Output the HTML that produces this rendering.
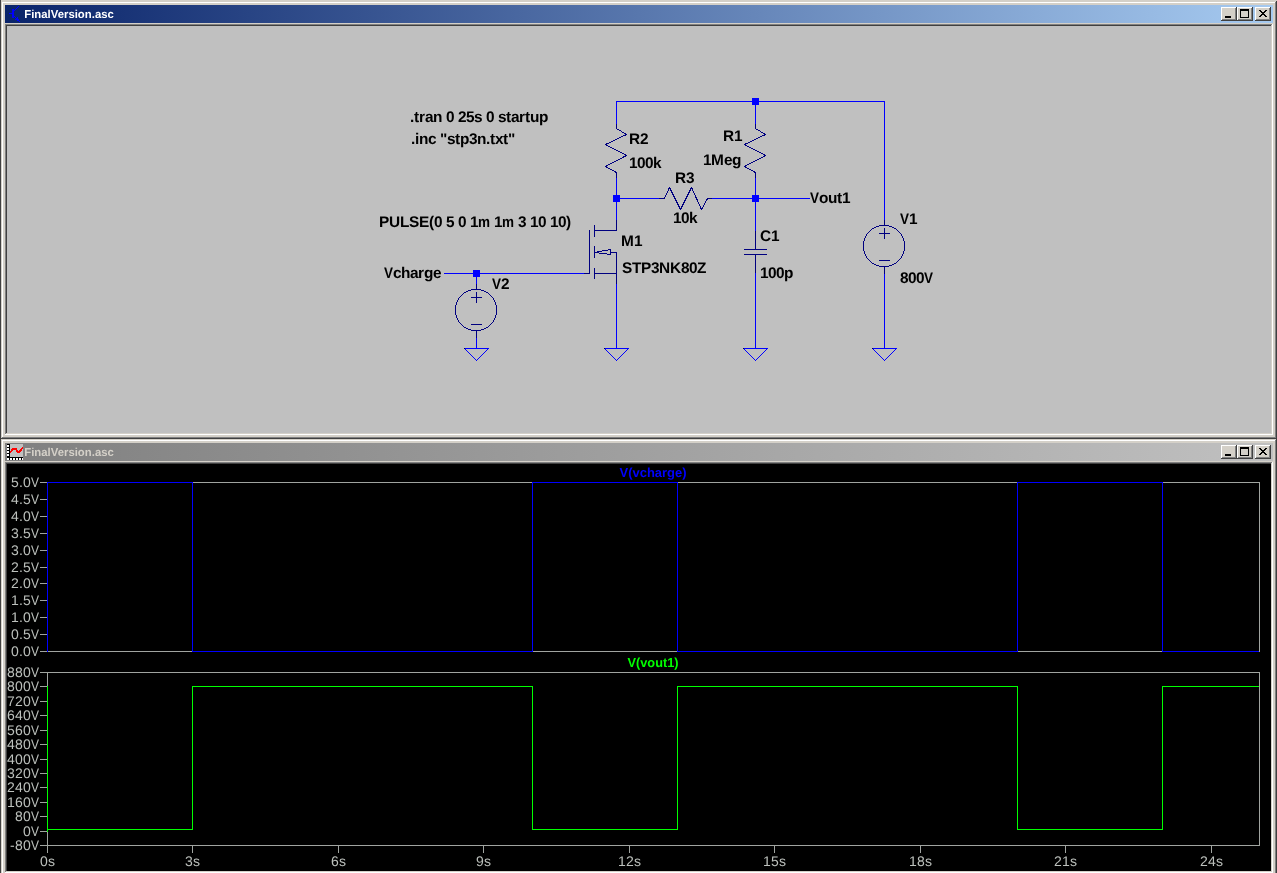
<!DOCTYPE html>
<html><head><meta charset="utf-8"><title>FinalVersion.asc</title>
<style>
html,body{margin:0;padding:0;background:#d4d0c8;overflow:hidden}
body{width:1277px;height:873px;position:relative}
svg{position:absolute;left:0;top:0;display:block;will-change:transform;font-family:"Liberation Sans",sans-serif;shape-rendering:crispEdges}
text{text-rendering:geometricPrecision}
</style></head><body>
<svg width="1277" height="873" viewBox="0 0 1277 873">
<defs>
<linearGradient id="ga" x1="0" y1="0" x2="1" y2="0"><stop offset="0" stop-color="#0a246a"/><stop offset="1" stop-color="#a6caf0"/></linearGradient>
<linearGradient id="gi" x1="0" y1="0" x2="1" y2="0"><stop offset="0" stop-color="#808080"/><stop offset="1" stop-color="#c0c0c0"/></linearGradient>
</defs>
<rect x="0" y="0" width="1277" height="873" fill="#d4d0c8"/>
<rect x="0" y="0" width="1" height="873" fill="#404040"/>
<rect x="1" y="1" width="1276" height="1" fill="#d4d0c8"/>
<rect x="1" y="1" width="1" height="438" fill="#d4d0c8"/>
<rect x="2" y="2" width="1274" height="1" fill="#ffffff"/>
<rect x="2" y="2" width="1" height="436" fill="#ffffff"/>
<rect x="1276" y="1" width="1" height="438" fill="#404040"/>
<rect x="1" y="438" width="1276" height="1" fill="#404040"/>
<rect x="1275" y="2" width="1" height="436" fill="#808080"/>
<rect x="2" y="437" width="1274" height="1" fill="#808080"/>
<rect x="5" y="5" width="1268" height="18" fill="url(#ga)"/>
<rect x="5" y="24" width="1268" height="1" fill="#808080"/>
<rect x="5" y="24" width="1" height="411" fill="#808080"/>
<rect x="6" y="25" width="1266" height="1" fill="#404040"/>
<rect x="6" y="25" width="1" height="409" fill="#404040"/>
<rect x="1272" y="24" width="1" height="411" fill="#ffffff"/>
<rect x="5" y="434" width="1268" height="1" fill="#ffffff"/>
<rect x="1271" y="25" width="1" height="409" fill="#d4d0c8"/>
<rect x="6" y="433" width="1266" height="1" fill="#d4d0c8"/>
<rect x="7" y="26" width="1264" height="407" fill="#c0c0c0"/>
<rect x="1221" y="7" width="16" height="14" fill="#d4d0c8"/>
<rect x="1221" y="7" width="15" height="1" fill="#ffffff"/>
<rect x="1221" y="7" width="1" height="13" fill="#ffffff"/>
<rect x="1221" y="20" width="16" height="1" fill="#404040"/>
<rect x="1236" y="7" width="1" height="14" fill="#404040"/>
<rect x="1222" y="19" width="14" height="1" fill="#808080"/>
<rect x="1235" y="8" width="1" height="12" fill="#808080"/>
<rect x="1225" y="16" width="6" height="2" fill="#000"/>
<rect x="1237" y="7" width="16" height="14" fill="#d4d0c8"/>
<rect x="1237" y="7" width="15" height="1" fill="#ffffff"/>
<rect x="1237" y="7" width="1" height="13" fill="#ffffff"/>
<rect x="1237" y="20" width="16" height="1" fill="#404040"/>
<rect x="1252" y="7" width="1" height="14" fill="#404040"/>
<rect x="1238" y="19" width="14" height="1" fill="#808080"/>
<rect x="1251" y="8" width="1" height="12" fill="#808080"/>
<rect x="1240" y="9" width="9" height="2" fill="#000"/>
<rect x="1240" y="9" width="1" height="9" fill="#000"/>
<rect x="1248" y="9" width="1" height="9" fill="#000"/>
<rect x="1240" y="17" width="9" height="1" fill="#000"/>
<rect x="1255" y="7" width="16" height="14" fill="#d4d0c8"/>
<rect x="1255" y="7" width="15" height="1" fill="#ffffff"/>
<rect x="1255" y="7" width="1" height="13" fill="#ffffff"/>
<rect x="1255" y="20" width="16" height="1" fill="#404040"/>
<rect x="1270" y="7" width="1" height="14" fill="#404040"/>
<rect x="1256" y="19" width="14" height="1" fill="#808080"/>
<rect x="1269" y="8" width="1" height="12" fill="#808080"/>
<rect x="1259" y="10" width="2" height="1" fill="#000"/>
<rect x="1265" y="10" width="2" height="1" fill="#000"/>
<rect x="1260" y="11" width="2" height="1" fill="#000"/>
<rect x="1264" y="11" width="2" height="1" fill="#000"/>
<rect x="1261" y="12" width="2" height="1" fill="#000"/>
<rect x="1263" y="12" width="2" height="1" fill="#000"/>
<rect x="1262" y="13" width="2" height="1" fill="#000"/>
<rect x="1262" y="13" width="2" height="1" fill="#000"/>
<rect x="1263" y="14" width="2" height="1" fill="#000"/>
<rect x="1261" y="14" width="2" height="1" fill="#000"/>
<rect x="1264" y="15" width="2" height="1" fill="#000"/>
<rect x="1260" y="15" width="2" height="1" fill="#000"/>
<rect x="1265" y="16" width="2" height="1" fill="#000"/>
<rect x="1259" y="16" width="2" height="1" fill="#000"/>
<text x="24.3" y="18" font-size="11.5" fill="#fff" font-weight="bold" textLength="89.5" lengthAdjust="spacingAndGlyphs">FinalVersion.asc</text>
<rect x="12" y="9" width="2" height="9" fill="#0000ff"/>
<rect x="9" y="13" width="3" height="1" fill="#0000ff"/>
<rect x="14" y="10" width="1" height="1" fill="#0000ff"/>
<rect x="15" y="9" width="1" height="1" fill="#0000ff"/>
<rect x="16" y="8" width="1" height="1" fill="#0000ff"/>
<rect x="17" y="7" width="1" height="1" fill="#0000ff"/>
<rect x="18" y="6" width="1" height="1" fill="#0000ff"/>
<rect x="14" y="10" width="1" height="1" fill="#0000ff"/>
<rect x="14" y="16" width="1" height="1" fill="#0000ff"/>
<rect x="15" y="17" width="1" height="1" fill="#0000ff"/>
<rect x="16" y="18" width="1" height="1" fill="#0000ff"/>
<rect x="17" y="19" width="1" height="1" fill="#0000ff"/>
<rect x="18" y="20" width="1" height="1" fill="#0000ff"/>
<rect x="19" y="21" width="1" height="1" fill="#0000ff"/>
<rect x="16" y="18" width="2" height="1" fill="#0000ff"/>
<rect x="15" y="19" width="4" height="1" fill="#0000ff"/>
<rect x="17" y="17" width="1" height="1" fill="#0000ff"/>
<rect x="17" y="20" width="2" height="1" fill="#0000ff"/>
<rect x="1" y="439" width="1276" height="1" fill="#d4d0c8"/>
<rect x="1" y="439" width="1" height="438" fill="#d4d0c8"/>
<rect x="2" y="440" width="1274" height="1" fill="#ffffff"/>
<rect x="2" y="440" width="1" height="436" fill="#ffffff"/>
<rect x="1276" y="439" width="1" height="438" fill="#404040"/>
<rect x="1" y="876" width="1276" height="1" fill="#404040"/>
<rect x="1275" y="440" width="1" height="436" fill="#808080"/>
<rect x="2" y="875" width="1274" height="1" fill="#808080"/>
<rect x="5" y="443" width="1268" height="18" fill="url(#gi)"/>
<rect x="5" y="462" width="1268" height="1" fill="#808080"/>
<rect x="5" y="462" width="1" height="411" fill="#808080"/>
<rect x="6" y="463" width="1266" height="1" fill="#404040"/>
<rect x="6" y="463" width="1" height="409" fill="#404040"/>
<rect x="1272" y="462" width="1" height="411" fill="#ffffff"/>
<rect x="5" y="872" width="1268" height="1" fill="#ffffff"/>
<rect x="1271" y="463" width="1" height="409" fill="#d4d0c8"/>
<rect x="6" y="871" width="1266" height="1" fill="#d4d0c8"/>
<rect x="7" y="464" width="1264" height="407" fill="#000000"/>
<rect x="1221" y="445" width="16" height="14" fill="#d4d0c8"/>
<rect x="1221" y="445" width="15" height="1" fill="#ffffff"/>
<rect x="1221" y="445" width="1" height="13" fill="#ffffff"/>
<rect x="1221" y="458" width="16" height="1" fill="#404040"/>
<rect x="1236" y="445" width="1" height="14" fill="#404040"/>
<rect x="1222" y="457" width="14" height="1" fill="#808080"/>
<rect x="1235" y="446" width="1" height="12" fill="#808080"/>
<rect x="1225" y="454" width="6" height="2" fill="#000"/>
<rect x="1237" y="445" width="16" height="14" fill="#d4d0c8"/>
<rect x="1237" y="445" width="15" height="1" fill="#ffffff"/>
<rect x="1237" y="445" width="1" height="13" fill="#ffffff"/>
<rect x="1237" y="458" width="16" height="1" fill="#404040"/>
<rect x="1252" y="445" width="1" height="14" fill="#404040"/>
<rect x="1238" y="457" width="14" height="1" fill="#808080"/>
<rect x="1251" y="446" width="1" height="12" fill="#808080"/>
<rect x="1240" y="447" width="9" height="2" fill="#000"/>
<rect x="1240" y="447" width="1" height="9" fill="#000"/>
<rect x="1248" y="447" width="1" height="9" fill="#000"/>
<rect x="1240" y="455" width="9" height="1" fill="#000"/>
<rect x="1255" y="445" width="16" height="14" fill="#d4d0c8"/>
<rect x="1255" y="445" width="15" height="1" fill="#ffffff"/>
<rect x="1255" y="445" width="1" height="13" fill="#ffffff"/>
<rect x="1255" y="458" width="16" height="1" fill="#404040"/>
<rect x="1270" y="445" width="1" height="14" fill="#404040"/>
<rect x="1256" y="457" width="14" height="1" fill="#808080"/>
<rect x="1269" y="446" width="1" height="12" fill="#808080"/>
<rect x="1259" y="448" width="2" height="1" fill="#000"/>
<rect x="1265" y="448" width="2" height="1" fill="#000"/>
<rect x="1260" y="449" width="2" height="1" fill="#000"/>
<rect x="1264" y="449" width="2" height="1" fill="#000"/>
<rect x="1261" y="450" width="2" height="1" fill="#000"/>
<rect x="1263" y="450" width="2" height="1" fill="#000"/>
<rect x="1262" y="451" width="2" height="1" fill="#000"/>
<rect x="1262" y="451" width="2" height="1" fill="#000"/>
<rect x="1263" y="452" width="2" height="1" fill="#000"/>
<rect x="1261" y="452" width="2" height="1" fill="#000"/>
<rect x="1264" y="453" width="2" height="1" fill="#000"/>
<rect x="1260" y="453" width="2" height="1" fill="#000"/>
<rect x="1265" y="454" width="2" height="1" fill="#000"/>
<rect x="1259" y="454" width="2" height="1" fill="#000"/>
<text x="24.3" y="456" font-size="11.5" fill="#d4d0c8" font-weight="bold" textLength="89.5" lengthAdjust="spacingAndGlyphs">FinalVersion.asc</text>
<rect x="7" y="444" width="16" height="16" fill="#000"/>
<rect x="10" y="444" width="13" height="13" fill="#c0c0c0"/>
<rect x="7" y="445" width="2" height="2" fill="#ffffff"/>
<rect x="7" y="448" width="2" height="2" fill="#ffffff"/>
<rect x="7" y="451" width="2" height="2" fill="#ffffff"/>
<rect x="7" y="454" width="2" height="2" fill="#ffffff"/>
<rect x="7" y="458" width="2" height="2" fill="#ffffff"/>
<rect x="10" y="458" width="2" height="2" fill="#ffffff"/>
<rect x="13" y="458" width="2" height="2" fill="#ffffff"/>
<rect x="16" y="458" width="2" height="2" fill="#ffffff"/>
<rect x="19" y="458" width="2" height="2" fill="#ffffff"/>
<rect x="22" y="458" width="1" height="2" fill="#ffffff"/>
<path d="M10.3 452.6 L13 448.6 L15.5 448.6 L17.5 451.6 L19.6 451.6 L23 447.4" stroke="#ff0000" stroke-width="1.8" fill="none" stroke-linecap="butt" stroke-linejoin="miter"/>
<rect x="616" y="101" width="269" height="1" fill="#0000ff"/>
<rect x="616" y="101" width="1" height="23" fill="#0000ff"/>
<rect x="616" y="177" width="1" height="43" fill="#0000ff"/>
<rect x="755" y="101" width="1" height="23" fill="#0000ff"/>
<rect x="755" y="177" width="1" height="54" fill="#0000ff"/>
<rect x="884" y="101" width="1" height="119" fill="#0000ff"/>
<rect x="884" y="273" width="1" height="76" fill="#0000ff"/>
<rect x="616" y="198" width="43" height="1" fill="#0000ff"/>
<rect x="712" y="198" width="98" height="1" fill="#0000ff"/>
<rect x="755" y="273" width="1" height="76" fill="#0000ff"/>
<rect x="616" y="284" width="1" height="65" fill="#0000ff"/>
<rect x="444" y="273" width="140" height="1" fill="#0000ff"/>
<rect x="476" y="273" width="1" height="11" fill="#0000ff"/>
<rect x="476" y="337" width="1" height="12" fill="#0000ff"/>
<rect x="752" y="98" width="7" height="7" fill="#0000ff"/>
<rect x="613" y="195" width="7" height="7" fill="#0000ff"/>
<rect x="752" y="195" width="7" height="7" fill="#0000ff"/>
<rect x="473" y="270" width="7" height="7" fill="#0000ff"/>
<rect x="464" y="348" width="25" height="1" fill="#0000ff"/>
<path d="M464.5 348.5 L476.5 360.5 L488.5 348.5" stroke="#0000ff" stroke-width="1" fill="none" stroke-linecap="square" stroke-linejoin="bevel"/>
<rect x="464" y="348" width="1" height="1" fill="#000040"/>
<rect x="604" y="348" width="25" height="1" fill="#0000ff"/>
<path d="M604.5 348.5 L616.5 360.5 L628.5 348.5" stroke="#0000ff" stroke-width="1" fill="none" stroke-linecap="square" stroke-linejoin="bevel"/>
<rect x="604" y="348" width="1" height="1" fill="#000040"/>
<rect x="743" y="348" width="25" height="1" fill="#0000ff"/>
<path d="M743.5 348.5 L755.5 360.5 L767.5 348.5" stroke="#0000ff" stroke-width="1" fill="none" stroke-linecap="square" stroke-linejoin="bevel"/>
<rect x="743" y="348" width="1" height="1" fill="#000040"/>
<rect x="872" y="348" width="25" height="1" fill="#0000ff"/>
<path d="M872.5 348.5 L884.5 360.5 L896.5 348.5" stroke="#0000ff" stroke-width="1" fill="none" stroke-linecap="square" stroke-linejoin="bevel"/>
<rect x="872" y="348" width="1" height="1" fill="#000040"/>
<path d="M616.5 124.5 L616.5 128.5 L626.5 134.5 L605.5 144.5 L626.5 155.5 L605.5 166.5 L616.5 172.5 L616.5 177.5" stroke="#000080" stroke-width="1" fill="none" stroke-linecap="square" stroke-linejoin="bevel"/>
<path d="M755.5 124.5 L755.5 128.5 L765.5 134.5 L744.5 144.5 L765.5 155.5 L744.5 166.5 L755.5 172.5 L755.5 177.5" stroke="#000080" stroke-width="1" fill="none" stroke-linecap="square" stroke-linejoin="bevel"/>
<path d="M659.5 198.5 L664.5 198.5 L669.5 187.5 L680.5 209.5 L691.5 187.5 L701.5 209.5 L707.5 198.5 L711.5 198.5" stroke="#000080" stroke-width="1" fill="none" stroke-linecap="square" stroke-linejoin="bevel"/>
<rect x="755" y="231" width="1" height="19" fill="#000080"/>
<rect x="744" y="249" width="23" height="1" fill="#000080"/>
<rect x="744" y="254" width="23" height="1" fill="#000080"/>
<rect x="755" y="254" width="1" height="19" fill="#000080"/>
<rect x="884" y="220" width="1" height="6" fill="#000080"/>
<rect x="879" y="225" width="10" height="1" fill="#000080"/>
<rect x="876" y="226" width="3" height="1" fill="#000080"/>
<rect x="889" y="226" width="3" height="1" fill="#000080"/>
<rect x="874" y="227" width="2" height="1" fill="#000080"/>
<rect x="892" y="227" width="2" height="1" fill="#000080"/>
<rect x="872" y="228" width="2" height="1" fill="#000080"/>
<rect x="894" y="228" width="2" height="1" fill="#000080"/>
<rect x="871" y="229" width="1" height="1" fill="#000080"/>
<rect x="896" y="229" width="1" height="1" fill="#000080"/>
<rect x="870" y="230" width="1" height="1" fill="#000080"/>
<rect x="897" y="230" width="1" height="1" fill="#000080"/>
<rect x="869" y="231" width="1" height="1" fill="#000080"/>
<rect x="898" y="231" width="1" height="1" fill="#000080"/>
<rect x="868" y="232" width="1" height="1" fill="#000080"/>
<rect x="899" y="232" width="1" height="1" fill="#000080"/>
<rect x="867" y="233" width="1" height="1" fill="#000080"/>
<rect x="900" y="233" width="1" height="1" fill="#000080"/>
<rect x="866" y="234" width="1" height="1" fill="#000080"/>
<rect x="901" y="234" width="1" height="1" fill="#000080"/>
<rect x="866" y="235" width="1" height="1" fill="#000080"/>
<rect x="901" y="235" width="1" height="1" fill="#000080"/>
<rect x="865" y="236" width="1" height="1" fill="#000080"/>
<rect x="902" y="236" width="1" height="1" fill="#000080"/>
<rect x="865" y="237" width="1" height="1" fill="#000080"/>
<rect x="902" y="237" width="1" height="1" fill="#000080"/>
<rect x="864" y="238" width="1" height="1" fill="#000080"/>
<rect x="903" y="238" width="1" height="1" fill="#000080"/>
<rect x="864" y="239" width="1" height="1" fill="#000080"/>
<rect x="903" y="239" width="1" height="1" fill="#000080"/>
<rect x="864" y="240" width="1" height="1" fill="#000080"/>
<rect x="903" y="240" width="1" height="1" fill="#000080"/>
<rect x="863" y="241" width="1" height="1" fill="#000080"/>
<rect x="904" y="241" width="1" height="1" fill="#000080"/>
<rect x="863" y="242" width="1" height="1" fill="#000080"/>
<rect x="904" y="242" width="1" height="1" fill="#000080"/>
<rect x="863" y="243" width="1" height="1" fill="#000080"/>
<rect x="904" y="243" width="1" height="1" fill="#000080"/>
<rect x="863" y="244" width="1" height="1" fill="#000080"/>
<rect x="904" y="244" width="1" height="1" fill="#000080"/>
<rect x="863" y="245" width="1" height="1" fill="#000080"/>
<rect x="904" y="245" width="1" height="1" fill="#000080"/>
<rect x="863" y="246" width="1" height="1" fill="#000080"/>
<rect x="904" y="246" width="1" height="1" fill="#000080"/>
<rect x="863" y="247" width="1" height="1" fill="#000080"/>
<rect x="904" y="247" width="1" height="1" fill="#000080"/>
<rect x="863" y="248" width="1" height="1" fill="#000080"/>
<rect x="904" y="248" width="1" height="1" fill="#000080"/>
<rect x="863" y="249" width="1" height="1" fill="#000080"/>
<rect x="904" y="249" width="1" height="1" fill="#000080"/>
<rect x="863" y="250" width="1" height="1" fill="#000080"/>
<rect x="904" y="250" width="1" height="1" fill="#000080"/>
<rect x="864" y="251" width="1" height="1" fill="#000080"/>
<rect x="903" y="251" width="1" height="1" fill="#000080"/>
<rect x="864" y="252" width="1" height="1" fill="#000080"/>
<rect x="903" y="252" width="1" height="1" fill="#000080"/>
<rect x="864" y="253" width="1" height="1" fill="#000080"/>
<rect x="903" y="253" width="1" height="1" fill="#000080"/>
<rect x="865" y="254" width="1" height="1" fill="#000080"/>
<rect x="902" y="254" width="1" height="1" fill="#000080"/>
<rect x="865" y="255" width="1" height="1" fill="#000080"/>
<rect x="902" y="255" width="1" height="1" fill="#000080"/>
<rect x="866" y="256" width="1" height="1" fill="#000080"/>
<rect x="901" y="256" width="1" height="1" fill="#000080"/>
<rect x="866" y="257" width="1" height="1" fill="#000080"/>
<rect x="901" y="257" width="1" height="1" fill="#000080"/>
<rect x="867" y="258" width="1" height="1" fill="#000080"/>
<rect x="900" y="258" width="1" height="1" fill="#000080"/>
<rect x="868" y="259" width="1" height="1" fill="#000080"/>
<rect x="899" y="259" width="1" height="1" fill="#000080"/>
<rect x="869" y="260" width="1" height="1" fill="#000080"/>
<rect x="898" y="260" width="1" height="1" fill="#000080"/>
<rect x="870" y="261" width="1" height="1" fill="#000080"/>
<rect x="897" y="261" width="1" height="1" fill="#000080"/>
<rect x="871" y="262" width="1" height="1" fill="#000080"/>
<rect x="896" y="262" width="1" height="1" fill="#000080"/>
<rect x="872" y="263" width="2" height="1" fill="#000080"/>
<rect x="894" y="263" width="2" height="1" fill="#000080"/>
<rect x="874" y="264" width="2" height="1" fill="#000080"/>
<rect x="892" y="264" width="2" height="1" fill="#000080"/>
<rect x="876" y="265" width="3" height="1" fill="#000080"/>
<rect x="889" y="265" width="3" height="1" fill="#000080"/>
<rect x="879" y="266" width="10" height="1" fill="#000080"/>
<rect x="879" y="233" width="11" height="1" fill="#000080"/>
<rect x="884" y="228" width="1" height="11" fill="#000080"/>
<rect x="879" y="260" width="11" height="1" fill="#000080"/>
<rect x="884" y="267" width="1" height="7" fill="#000080"/>
<rect x="476" y="284" width="1" height="6" fill="#000080"/>
<rect x="471" y="289" width="10" height="1" fill="#000080"/>
<rect x="468" y="290" width="3" height="1" fill="#000080"/>
<rect x="481" y="290" width="3" height="1" fill="#000080"/>
<rect x="466" y="291" width="2" height="1" fill="#000080"/>
<rect x="484" y="291" width="2" height="1" fill="#000080"/>
<rect x="464" y="292" width="2" height="1" fill="#000080"/>
<rect x="486" y="292" width="2" height="1" fill="#000080"/>
<rect x="463" y="293" width="1" height="1" fill="#000080"/>
<rect x="488" y="293" width="1" height="1" fill="#000080"/>
<rect x="462" y="294" width="1" height="1" fill="#000080"/>
<rect x="489" y="294" width="1" height="1" fill="#000080"/>
<rect x="461" y="295" width="1" height="1" fill="#000080"/>
<rect x="490" y="295" width="1" height="1" fill="#000080"/>
<rect x="460" y="296" width="1" height="1" fill="#000080"/>
<rect x="491" y="296" width="1" height="1" fill="#000080"/>
<rect x="459" y="297" width="1" height="1" fill="#000080"/>
<rect x="492" y="297" width="1" height="1" fill="#000080"/>
<rect x="458" y="298" width="1" height="1" fill="#000080"/>
<rect x="493" y="298" width="1" height="1" fill="#000080"/>
<rect x="458" y="299" width="1" height="1" fill="#000080"/>
<rect x="493" y="299" width="1" height="1" fill="#000080"/>
<rect x="457" y="300" width="1" height="1" fill="#000080"/>
<rect x="494" y="300" width="1" height="1" fill="#000080"/>
<rect x="457" y="301" width="1" height="1" fill="#000080"/>
<rect x="494" y="301" width="1" height="1" fill="#000080"/>
<rect x="456" y="302" width="1" height="1" fill="#000080"/>
<rect x="495" y="302" width="1" height="1" fill="#000080"/>
<rect x="456" y="303" width="1" height="1" fill="#000080"/>
<rect x="495" y="303" width="1" height="1" fill="#000080"/>
<rect x="456" y="304" width="1" height="1" fill="#000080"/>
<rect x="495" y="304" width="1" height="1" fill="#000080"/>
<rect x="455" y="305" width="1" height="1" fill="#000080"/>
<rect x="496" y="305" width="1" height="1" fill="#000080"/>
<rect x="455" y="306" width="1" height="1" fill="#000080"/>
<rect x="496" y="306" width="1" height="1" fill="#000080"/>
<rect x="455" y="307" width="1" height="1" fill="#000080"/>
<rect x="496" y="307" width="1" height="1" fill="#000080"/>
<rect x="455" y="308" width="1" height="1" fill="#000080"/>
<rect x="496" y="308" width="1" height="1" fill="#000080"/>
<rect x="455" y="309" width="1" height="1" fill="#000080"/>
<rect x="496" y="309" width="1" height="1" fill="#000080"/>
<rect x="455" y="310" width="1" height="1" fill="#000080"/>
<rect x="496" y="310" width="1" height="1" fill="#000080"/>
<rect x="455" y="311" width="1" height="1" fill="#000080"/>
<rect x="496" y="311" width="1" height="1" fill="#000080"/>
<rect x="455" y="312" width="1" height="1" fill="#000080"/>
<rect x="496" y="312" width="1" height="1" fill="#000080"/>
<rect x="455" y="313" width="1" height="1" fill="#000080"/>
<rect x="496" y="313" width="1" height="1" fill="#000080"/>
<rect x="455" y="314" width="1" height="1" fill="#000080"/>
<rect x="496" y="314" width="1" height="1" fill="#000080"/>
<rect x="456" y="315" width="1" height="1" fill="#000080"/>
<rect x="495" y="315" width="1" height="1" fill="#000080"/>
<rect x="456" y="316" width="1" height="1" fill="#000080"/>
<rect x="495" y="316" width="1" height="1" fill="#000080"/>
<rect x="456" y="317" width="1" height="1" fill="#000080"/>
<rect x="495" y="317" width="1" height="1" fill="#000080"/>
<rect x="457" y="318" width="1" height="1" fill="#000080"/>
<rect x="494" y="318" width="1" height="1" fill="#000080"/>
<rect x="457" y="319" width="1" height="1" fill="#000080"/>
<rect x="494" y="319" width="1" height="1" fill="#000080"/>
<rect x="458" y="320" width="1" height="1" fill="#000080"/>
<rect x="493" y="320" width="1" height="1" fill="#000080"/>
<rect x="458" y="321" width="1" height="1" fill="#000080"/>
<rect x="493" y="321" width="1" height="1" fill="#000080"/>
<rect x="459" y="322" width="1" height="1" fill="#000080"/>
<rect x="492" y="322" width="1" height="1" fill="#000080"/>
<rect x="460" y="323" width="1" height="1" fill="#000080"/>
<rect x="491" y="323" width="1" height="1" fill="#000080"/>
<rect x="461" y="324" width="1" height="1" fill="#000080"/>
<rect x="490" y="324" width="1" height="1" fill="#000080"/>
<rect x="462" y="325" width="1" height="1" fill="#000080"/>
<rect x="489" y="325" width="1" height="1" fill="#000080"/>
<rect x="463" y="326" width="1" height="1" fill="#000080"/>
<rect x="488" y="326" width="1" height="1" fill="#000080"/>
<rect x="464" y="327" width="2" height="1" fill="#000080"/>
<rect x="486" y="327" width="2" height="1" fill="#000080"/>
<rect x="466" y="328" width="2" height="1" fill="#000080"/>
<rect x="484" y="328" width="2" height="1" fill="#000080"/>
<rect x="468" y="329" width="3" height="1" fill="#000080"/>
<rect x="481" y="329" width="3" height="1" fill="#000080"/>
<rect x="471" y="330" width="10" height="1" fill="#000080"/>
<rect x="471" y="297" width="11" height="1" fill="#000080"/>
<rect x="476" y="292" width="1" height="11" fill="#000080"/>
<rect x="471" y="324" width="11" height="1" fill="#000080"/>
<rect x="476" y="331" width="1" height="7" fill="#000080"/>
<rect x="616" y="220" width="1" height="11" fill="#000080"/>
<rect x="594" y="230" width="23" height="1" fill="#000080"/>
<rect x="594" y="225" width="1" height="12" fill="#000080"/>
<rect x="594" y="246" width="1" height="12" fill="#000080"/>
<rect x="594" y="268" width="1" height="11" fill="#000080"/>
<rect x="589" y="230" width="1" height="44" fill="#000080"/>
<rect x="584" y="273" width="6" height="1" fill="#000080"/>
<rect x="594" y="273" width="23" height="1" fill="#000080"/>
<rect x="616" y="252" width="1" height="32" fill="#000080"/>
<rect x="610" y="252" width="7" height="1" fill="#000080"/>
<rect x="610" y="249" width="1" height="6" fill="#000080"/>
<path d="M594.5 252.5 L610.5 249.5" stroke="#000080" stroke-width="1" fill="none" stroke-linecap="square" stroke-linejoin="bevel"/>
<path d="M594.5 252.5 L610.5 254.5" stroke="#000080" stroke-width="1" fill="none" stroke-linecap="square" stroke-linejoin="bevel"/>
<text x="410 414 419 425 433 442 446 454 458 466 474 482 486 494 498 506 511 519 525 530 539" y="122" font-size="15.4" fill="#000" font-weight="bold" xml:space="preserve">.tran 0 25s 0 startup</text>
<text x="411 415 419 428 436 440 447 455 460 469 477 486 490 495 503 508" y="144" font-size="15.4" fill="#000" font-weight="bold" xml:space="preserve">.inc &quot;stp3n.txt&quot;</text>
<text x="379 389 400 409 419 429 434 442 446 454 458 466 470 478 490 494 502 514 518 526 530 538 546 550 558 566" y="227" font-size="15.4" fill="#000" font-weight="bold" xml:space="preserve">PULSE(0 5 0 1<tspan textLength="12" lengthAdjust="spacingAndGlyphs">m</tspan> 1<tspan textLength="12" lengthAdjust="spacingAndGlyphs">m</tspan> 3 10 10)</text>
<text x="384 393 401 410 418 424 433" y="278" font-size="15.4" fill="#000" font-weight="bold" xml:space="preserve"><tspan textLength="9" lengthAdjust="spacingAndGlyphs">V</tspan>charge</text>
<text x="492 501" y="289" font-size="15.4" fill="#000" font-weight="bold" xml:space="preserve"><tspan textLength="9" lengthAdjust="spacingAndGlyphs">V</tspan>2</text>
<text x="629 640" y="144" font-size="15.4" fill="#000" font-weight="bold" xml:space="preserve">R2</text>
<text x="629 637 645 653" y="168" font-size="15.4" fill="#000" font-weight="bold" xml:space="preserve">100k</text>
<text x="723 734" y="141" font-size="15.4" fill="#000" font-weight="bold" xml:space="preserve">R1</text>
<text x="703 711 724 732" y="165" font-size="15.4" fill="#000" font-weight="bold" xml:space="preserve">1Meg</text>
<text x="675 686" y="183" font-size="15.4" fill="#000" font-weight="bold" xml:space="preserve">R3</text>
<text x="673 681 689" y="223" font-size="15.4" fill="#000" font-weight="bold" xml:space="preserve">10k</text>
<text x="621 634" y="246" font-size="15.4" fill="#000" font-weight="bold" xml:space="preserve">M1</text>
<text x="622 632 641 651 659 670 681 689 697" y="273" font-size="15.4" fill="#000" font-weight="bold" xml:space="preserve">STP3NK80Z</text>
<text x="810 819 828 837 842" y="203" font-size="15.4" fill="#000" font-weight="bold" xml:space="preserve"><tspan textLength="9" lengthAdjust="spacingAndGlyphs">V</tspan>out1</text>
<text x="760 771" y="241" font-size="15.4" fill="#000" font-weight="bold" xml:space="preserve">C1</text>
<text x="760 768 776 784" y="278" font-size="15.4" fill="#000" font-weight="bold" xml:space="preserve">100p</text>
<text x="900 909" y="224" font-size="15.4" fill="#000" font-weight="bold" xml:space="preserve"><tspan textLength="9" lengthAdjust="spacingAndGlyphs">V</tspan>1</text>
<text x="900 908 916 924" y="283" font-size="15.4" fill="#000" font-weight="bold" xml:space="preserve">800<tspan textLength="9" lengthAdjust="spacingAndGlyphs">V</tspan></text>
<rect x="47" y="482" width="1213" height="1" fill="#a0a4a0"/>
<rect x="47" y="651" width="1213" height="1" fill="#a0a4a0"/>
<rect x="47" y="482" width="1" height="170" fill="#a0a4a0"/>
<rect x="1259" y="482" width="1" height="170" fill="#a0a4a0"/>
<rect x="40" y="482" width="7" height="1" fill="#a0a4a0"/>
<text x="11 19 23 31" y="487" font-size="14" fill="#bcc0bc" xml:space="preserve">5.0<tspan textLength="8" lengthAdjust="spacingAndGlyphs">V</tspan></text>
<rect x="40" y="499" width="7" height="1" fill="#a0a4a0"/>
<text x="11 19 23 31" y="504" font-size="14" fill="#bcc0bc" xml:space="preserve">4.5<tspan textLength="8" lengthAdjust="spacingAndGlyphs">V</tspan></text>
<rect x="40" y="516" width="7" height="1" fill="#a0a4a0"/>
<text x="11 19 23 31" y="521" font-size="14" fill="#bcc0bc" xml:space="preserve">4.0<tspan textLength="8" lengthAdjust="spacingAndGlyphs">V</tspan></text>
<rect x="40" y="533" width="7" height="1" fill="#a0a4a0"/>
<text x="11 19 23 31" y="538" font-size="14" fill="#bcc0bc" xml:space="preserve">3.5<tspan textLength="8" lengthAdjust="spacingAndGlyphs">V</tspan></text>
<rect x="40" y="550" width="7" height="1" fill="#a0a4a0"/>
<text x="11 19 23 31" y="555" font-size="14" fill="#bcc0bc" xml:space="preserve">3.0<tspan textLength="8" lengthAdjust="spacingAndGlyphs">V</tspan></text>
<rect x="40" y="567" width="7" height="1" fill="#a0a4a0"/>
<text x="11 19 23 31" y="572" font-size="14" fill="#bcc0bc" xml:space="preserve">2.5<tspan textLength="8" lengthAdjust="spacingAndGlyphs">V</tspan></text>
<rect x="40" y="583" width="7" height="1" fill="#a0a4a0"/>
<text x="11 19 23 31" y="588" font-size="14" fill="#bcc0bc" xml:space="preserve">2.0<tspan textLength="8" lengthAdjust="spacingAndGlyphs">V</tspan></text>
<rect x="40" y="600" width="7" height="1" fill="#a0a4a0"/>
<text x="11 19 23 31" y="605" font-size="14" fill="#bcc0bc" xml:space="preserve">1.5<tspan textLength="8" lengthAdjust="spacingAndGlyphs">V</tspan></text>
<rect x="40" y="617" width="7" height="1" fill="#a0a4a0"/>
<text x="11 19 23 31" y="622" font-size="14" fill="#bcc0bc" xml:space="preserve">1.0<tspan textLength="8" lengthAdjust="spacingAndGlyphs">V</tspan></text>
<rect x="40" y="634" width="7" height="1" fill="#a0a4a0"/>
<text x="11 19 23 31" y="639" font-size="14" fill="#bcc0bc" xml:space="preserve">0.5<tspan textLength="8" lengthAdjust="spacingAndGlyphs">V</tspan></text>
<rect x="40" y="651" width="7" height="1" fill="#a0a4a0"/>
<text x="11 19 23 31" y="656" font-size="14" fill="#bcc0bc" xml:space="preserve">0.0<tspan textLength="8" lengthAdjust="spacingAndGlyphs">V</tspan></text>
<rect x="47" y="672" width="1213" height="1" fill="#a0a4a0"/>
<rect x="47" y="845" width="1213" height="1" fill="#a0a4a0"/>
<rect x="47" y="672" width="1" height="174" fill="#a0a4a0"/>
<rect x="1259" y="672" width="1" height="174" fill="#a0a4a0"/>
<rect x="40" y="672" width="7" height="1" fill="#a0a4a0"/>
<text x="7 15 23 31" y="677" font-size="14" fill="#bcc0bc" xml:space="preserve">880<tspan textLength="8" lengthAdjust="spacingAndGlyphs">V</tspan></text>
<rect x="40" y="686" width="7" height="1" fill="#a0a4a0"/>
<text x="7 15 23 31" y="691" font-size="14" fill="#bcc0bc" xml:space="preserve">800<tspan textLength="8" lengthAdjust="spacingAndGlyphs">V</tspan></text>
<rect x="40" y="701" width="7" height="1" fill="#a0a4a0"/>
<text x="7 15 23 31" y="706" font-size="14" fill="#bcc0bc" xml:space="preserve">720<tspan textLength="8" lengthAdjust="spacingAndGlyphs">V</tspan></text>
<rect x="40" y="715" width="7" height="1" fill="#a0a4a0"/>
<text x="7 15 23 31" y="720" font-size="14" fill="#bcc0bc" xml:space="preserve">640<tspan textLength="8" lengthAdjust="spacingAndGlyphs">V</tspan></text>
<rect x="40" y="730" width="7" height="1" fill="#a0a4a0"/>
<text x="7 15 23 31" y="735" font-size="14" fill="#bcc0bc" xml:space="preserve">560<tspan textLength="8" lengthAdjust="spacingAndGlyphs">V</tspan></text>
<rect x="40" y="744" width="7" height="1" fill="#a0a4a0"/>
<text x="7 15 23 31" y="749" font-size="14" fill="#bcc0bc" xml:space="preserve">480<tspan textLength="8" lengthAdjust="spacingAndGlyphs">V</tspan></text>
<rect x="40" y="759" width="7" height="1" fill="#a0a4a0"/>
<text x="7 15 23 31" y="764" font-size="14" fill="#bcc0bc" xml:space="preserve">400<tspan textLength="8" lengthAdjust="spacingAndGlyphs">V</tspan></text>
<rect x="40" y="773" width="7" height="1" fill="#a0a4a0"/>
<text x="7 15 23 31" y="778" font-size="14" fill="#bcc0bc" xml:space="preserve">320<tspan textLength="8" lengthAdjust="spacingAndGlyphs">V</tspan></text>
<rect x="40" y="787" width="7" height="1" fill="#a0a4a0"/>
<text x="7 15 23 31" y="792" font-size="14" fill="#bcc0bc" xml:space="preserve">240<tspan textLength="8" lengthAdjust="spacingAndGlyphs">V</tspan></text>
<rect x="40" y="802" width="7" height="1" fill="#a0a4a0"/>
<text x="7 15 23 31" y="807" font-size="14" fill="#bcc0bc" xml:space="preserve">160<tspan textLength="8" lengthAdjust="spacingAndGlyphs">V</tspan></text>
<rect x="40" y="816" width="7" height="1" fill="#a0a4a0"/>
<text x="15 23 31" y="821" font-size="14" fill="#bcc0bc" xml:space="preserve">80<tspan textLength="8" lengthAdjust="spacingAndGlyphs">V</tspan></text>
<rect x="40" y="831" width="7" height="1" fill="#a0a4a0"/>
<text x="23 31" y="836" font-size="14" fill="#bcc0bc" xml:space="preserve">0<tspan textLength="8" lengthAdjust="spacingAndGlyphs">V</tspan></text>
<rect x="40" y="845" width="7" height="1" fill="#a0a4a0"/>
<text x="10 15 23 31" y="850" font-size="14" fill="#bcc0bc" xml:space="preserve">-80<tspan textLength="8" lengthAdjust="spacingAndGlyphs">V</tspan></text>
<rect x="47" y="845" width="1" height="8" fill="#a0a4a0"/>
<text x="40 48" y="866" font-size="14" fill="#bcc0bc" xml:space="preserve">0s</text>
<rect x="192" y="845" width="1" height="8" fill="#a0a4a0"/>
<text x="185 193" y="866" font-size="14" fill="#bcc0bc" xml:space="preserve">3s</text>
<rect x="338" y="845" width="1" height="8" fill="#a0a4a0"/>
<text x="331 339" y="866" font-size="14" fill="#bcc0bc" xml:space="preserve">6s</text>
<rect x="483" y="845" width="1" height="8" fill="#a0a4a0"/>
<text x="476 484" y="866" font-size="14" fill="#bcc0bc" xml:space="preserve">9s</text>
<rect x="629" y="845" width="1" height="8" fill="#a0a4a0"/>
<text x="618 626 634" y="866" font-size="14" fill="#bcc0bc" xml:space="preserve">12s</text>
<rect x="774" y="845" width="1" height="8" fill="#a0a4a0"/>
<text x="763 771 779" y="866" font-size="14" fill="#bcc0bc" xml:space="preserve">15s</text>
<rect x="920" y="845" width="1" height="8" fill="#a0a4a0"/>
<text x="909 917 925" y="866" font-size="14" fill="#bcc0bc" xml:space="preserve">18s</text>
<rect x="1065" y="845" width="1" height="8" fill="#a0a4a0"/>
<text x="1054 1062 1070" y="866" font-size="14" fill="#bcc0bc" xml:space="preserve">21s</text>
<rect x="1211" y="845" width="1" height="8" fill="#a0a4a0"/>
<text x="1200 1208 1216" y="866" font-size="14" fill="#bcc0bc" xml:space="preserve">24s</text>
<text x="653" y="477" font-size="13" fill="#0000ff" font-weight="bold" text-anchor="middle" textLength="67" lengthAdjust="spacingAndGlyphs">V(vcharge)</text>
<text x="653" y="667" font-size="13" fill="#00ff00" font-weight="bold" text-anchor="middle" textLength="51" lengthAdjust="spacingAndGlyphs">V(vout1)</text>
<rect x="47" y="482" width="1" height="170" fill="#0000ff"/>
<rect x="47" y="482" width="146" height="1" fill="#0000ff"/>
<rect x="192" y="482" width="1" height="170" fill="#0000ff"/>
<rect x="192" y="651" width="341" height="1" fill="#0000ff"/>
<rect x="532" y="482" width="1" height="170" fill="#0000ff"/>
<rect x="532" y="482" width="146" height="1" fill="#0000ff"/>
<rect x="677" y="482" width="1" height="170" fill="#0000ff"/>
<rect x="677" y="651" width="341" height="1" fill="#0000ff"/>
<rect x="1017" y="482" width="1" height="170" fill="#0000ff"/>
<rect x="1017" y="482" width="146" height="1" fill="#0000ff"/>
<rect x="1162" y="482" width="1" height="170" fill="#0000ff"/>
<rect x="1162" y="651" width="97" height="1" fill="#0000ff"/>
<rect x="47" y="686" width="1" height="146" fill="#00ff00"/>
<rect x="47" y="829" width="146" height="1" fill="#00ff00"/>
<rect x="192" y="686" width="1" height="144" fill="#00ff00"/>
<rect x="192" y="686" width="341" height="1" fill="#00ff00"/>
<rect x="532" y="686" width="1" height="144" fill="#00ff00"/>
<rect x="532" y="829" width="146" height="1" fill="#00ff00"/>
<rect x="677" y="686" width="1" height="144" fill="#00ff00"/>
<rect x="677" y="686" width="341" height="1" fill="#00ff00"/>
<rect x="1017" y="686" width="1" height="144" fill="#00ff00"/>
<rect x="1017" y="829" width="146" height="1" fill="#00ff00"/>
<rect x="1162" y="686" width="1" height="144" fill="#00ff00"/>
<rect x="1162" y="686" width="97" height="1" fill="#00ff00"/>
</svg>
</body></html>
